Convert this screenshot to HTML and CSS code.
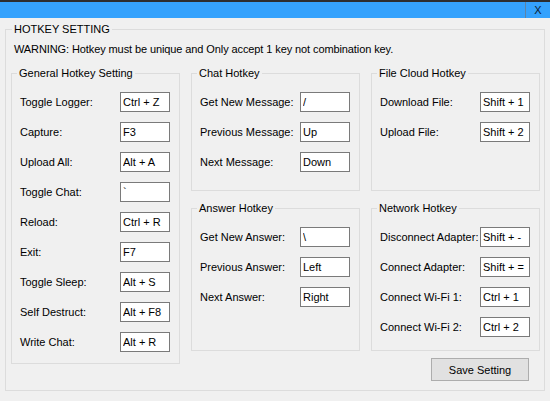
FILE: index.html
```html
<!DOCTYPE html>
<html>
<head>
<meta charset="utf-8">
<link rel="stylesheet" href="styles.css">
</head>
<body>
<div class="topstrip"></div>
<div class="titlebar"><div class="close">X</div></div>
<fieldset class="outer">
  <legend class="outer-legend">HOTKEY SETTING</legend>
  <p class="warning">WARNING: Hotkey must be unique and Only accept 1 key not combination key.</p>
  <div class="columns">
    <div class="col">
      <fieldset class="group group-tall">
        <legend>General Hotkey Setting</legend>
        <div class="row"><label>Toggle Logger:</label><input class="key" value="Ctrl + Z" readonly></div>
        <div class="row"><label>Capture:</label><input class="key" value="F3" readonly></div>
        <div class="row"><label>Upload All:</label><input class="key" value="Alt + A" readonly></div>
        <div class="row"><label>Toggle Chat:</label><input class="key" value="`" readonly></div>
        <div class="row"><label>Reload:</label><input class="key" value="Ctrl + R" readonly></div>
        <div class="row"><label>Exit:</label><input class="key" value="F7" readonly></div>
        <div class="row"><label>Toggle Sleep:</label><input class="key" value="Alt + S" readonly></div>
        <div class="row"><label>Self Destruct:</label><input class="key" value="Alt + F8" readonly></div>
        <div class="row"><label>Write Chat:</label><input class="key" value="Alt + R" readonly></div>
      </fieldset>
    </div>
    <div class="col">
      <fieldset class="group group-short">
        <legend>Chat Hotkey</legend>
        <div class="row"><label>Get New Message:</label><input class="key" value="/" readonly></div>
        <div class="row"><label>Previous Message:</label><input class="key" value="Up" readonly></div>
        <div class="row"><label>Next Message:</label><input class="key" value="Down" readonly></div>
      </fieldset>
      <fieldset class="group group-mid">
        <legend>Answer Hotkey</legend>
        <div class="row"><label>Get New Answer:</label><input class="key" value="\" readonly></div>
        <div class="row"><label>Previous Answer:</label><input class="key" value="Left" readonly></div>
        <div class="row"><label>Next Answer:</label><input class="key" value="Right" readonly></div>
      </fieldset>
    </div>
    <div class="col">
      <fieldset class="group group-short">
        <legend>File Cloud Hotkey</legend>
        <div class="row"><label>Download File:</label><input class="key" value="Shift + 1" readonly></div>
        <div class="row"><label>Upload File:</label><input class="key" value="Shift + 2" readonly></div>
      </fieldset>
      <fieldset class="group group-mid">
        <legend>Network Hotkey</legend>
        <div class="row"><label>Disconnect Adapter:</label><input class="key" value="Shift + -" readonly></div>
        <div class="row"><label>Connect Adapter:</label><input class="key" value="Shift + =" readonly></div>
        <div class="row"><label>Connect Wi-Fi 1:</label><input class="key" value="Ctrl + 1" readonly></div>
        <div class="row"><label>Connect Wi-Fi 2:</label><input class="key" value="Ctrl + 2" readonly></div>
      </fieldset>
      <button class="save">Save Setting</button>
    </div>
  </div>
</fieldset>
</body>
</html>
```

FILE: styles.css
```css
* { box-sizing: border-box; }
html, body {
  margin: 0;
  padding: 0;
  background: #f0f0f0;
  font-family: "Liberation Sans", Arial, sans-serif;
  font-size: 11px;
  line-height: 13px;
  color: #000;
}
.topstrip {
  height: 2px;
  background: #2d2d30;
}
.titlebar {
  height: 16px;
  background: #35a2fd;
  display: flex;
  justify-content: flex-end;
}
.close {
  width: 25px;
  border-left: 1px solid #5f84a6;
  text-align: center;
  line-height: 16px;
  color: #0b1d33;
  font-size: 11px;
}
fieldset {
  margin: 0;
  padding: 0;
  border: 1px solid #dcdcdc;
  min-width: 0;
}
legend {
  padding: 0 2px;
  font-size: 11px;
  line-height: 13px;
}
.outer {
  margin: 5px 0 0 5px;
  width: 540px;
  padding: 0 0 9px 0;
}
.outer-legend {
  margin-left: 6px;
}
.warning {
  margin: 7px 0 0 8px;
  line-height: 13px;
  letter-spacing: -0.1px;
}
.columns {
  display: flex;
  gap: 11px;
  margin-top: 11px;
  padding-left: 5px;
}
.col {
  width: 169px;
  display: flex;
  flex-direction: column;
  gap: 11px;
}
.group {
  width: 169px;
  padding: 12px 8px 0 8px;
}
.group legend {
  margin-left: -3px;
}
.group-tall { height: 297px; }
.group-short { height: 124px; }
.group-mid { height: 149px; }
.row {
  display: flex;
  align-items: center;
  height: 20px;
  margin-bottom: 10px;
}
.row label {
  width: 100px;
  flex: none;
  white-space: nowrap;
  padding-top: 1px;
}
.key {
  width: 50px;
  height: 20px;
  margin: 0;
  padding: 0 2px;
  border: 1px solid #7a7a7a;
  background: #fff;
  font-family: inherit;
  font-size: 11px;
  color: #000;
  outline: none;
  border-radius: 0;
}
.save {
  margin: -4px 11px 0 0;
  align-self: flex-end;
  width: 98px;
  height: 23px;
  background: #e1e1e1;
  border: 1px solid #adadad;
  border-radius: 0;
  font-family: inherit;
  font-size: 11px;
  color: #000;
  padding: 0;
}
```
